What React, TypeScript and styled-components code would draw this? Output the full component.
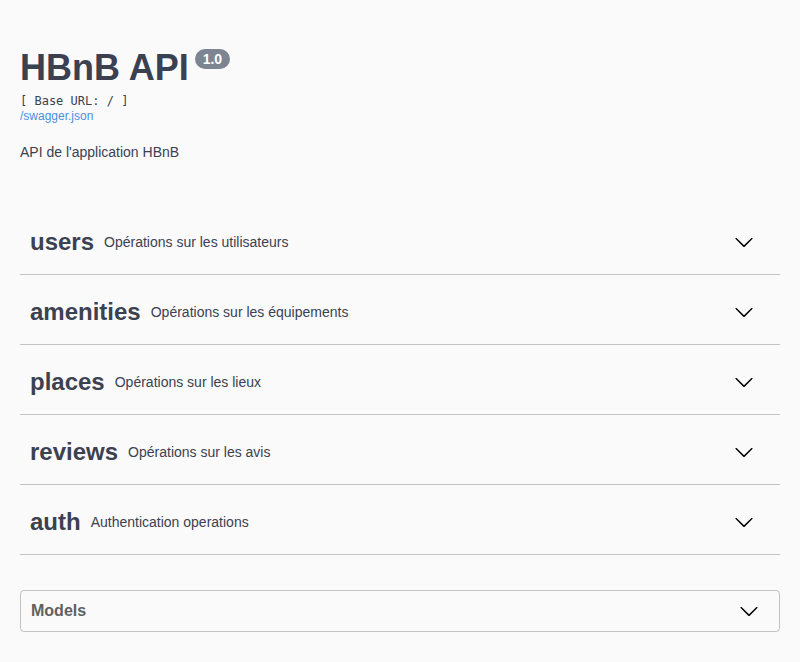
import React from "react";
import styled, { createGlobalStyle } from "styled-components";

const Global = createGlobalStyle`
  html, body { margin: 0; padding: 0; background: #fafafa; }
  body { font-family: "Liberation Sans", Arial, sans-serif; color: #3b4151; }
`;

const Page = styled.div`
  padding: 0 20px 30px;
  background: #fafafa;
`;

const Info = styled.div`
  padding-top: 47px;
  margin-bottom: 50px;
`;

const Title = styled.h2`
  margin: 0;
  font-size: 36px;
  line-height: 41px;
  font-weight: 700;
  color: #3b4151;
  display: flex;
  align-items: flex-start;
`;

const Version = styled.span`
  display: inline-block;
  margin: 2px 0 0 6px;
  padding: 2px 8px;
  border-radius: 57px;
  background: #7d8492;
  color: #fff;
  font-size: 14px;
  line-height: 16px;
  font-weight: 700;
`;

const BaseUrl = styled.pre`
  margin: 6px 0 0;
  font-family: "DejaVu Sans Mono", "Liberation Mono", monospace;
  font-size: 12px;
  line-height: 15px;
  color: #3b4151;
`;

const Link = styled.a`
  display: block;
  font-size: 12px;
  line-height: 14px;
  color: #4990e2;
  text-decoration: none;
`;

const Description = styled.p`
  margin: 21px 0 0;
  font-size: 14px;
  line-height: 16px;
  color: #3b4151;
`;

const TagRow = styled.div`
  display: flex;
  align-items: center;
  height: 44px;
  padding: 10px 26px 10px 10px;
  border-bottom: 1px solid rgba(59, 65, 81, 0.3);
  margin-bottom: 5px;
  cursor: pointer;
`;

const TagName = styled.span`
  font-size: 24px;
  font-weight: 700;
  color: #3b4151;
`;

const TagDesc = styled.small`
  flex: 1;
  padding: 0 10px;
  font-size: 14px;
  color: #3b4151;
`;

const Models = styled.section`
  margin-top: 35px;
  border: 1px solid rgba(59, 65, 81, 0.3);
  border-radius: 4px;
`;

const ModelsHead = styled.div`
  display: flex;
  align-items: center;
  height: 20px;
  padding: 10px 20px 10px 10px;
`;

const ModelsTitle = styled.h4`
  flex: 1;
  margin: 0;
  font-size: 16px;
  font-weight: 700;
  color: #606060;
`;

const Arrow = ({ color = "#000" }: { color?: string }) => (
  <svg width="20" height="20" viewBox="0 0 20 20" style={{ display: "block" }}>
    <path
      fill={color}
      d="M17.418 6.109c.272-.268.709-.268.979 0s.271.701 0 .969l-7.908 7.83c-.27.268-.707.268-.979 0l-7.908-7.83c-.27-.268-.27-.701 0-.969.271-.268.709-.268.979 0L10 13.25l7.418-7.141z"
    />
  </svg>
);

const tags = [
  ["users", "Opérations sur les utilisateurs"],
  ["amenities", "Opérations sur les équipements"],
  ["places", "Opérations sur les lieux"],
  ["reviews", "Opérations sur les avis"],
  ["auth", "Authentication operations"],
];

export default function App() {
  return (
    <Page>
      <Global />
      <Info>
        <Title>
          HBnB API<Version>1.0</Version>
        </Title>
        <BaseUrl>[ Base URL: / ]</BaseUrl>
        <Link href="#">/swagger.json</Link>
        <Description>API de l'application HBnB</Description>
      </Info>
      {tags.map(([name, desc]) => (
        <TagRow key={name}>
          <TagName>{name}</TagName>
          <TagDesc>{desc}</TagDesc>
          <Arrow />
        </TagRow>
      ))}
      <Models>
        <ModelsHead>
          <ModelsTitle>Models</ModelsTitle>
          <Arrow />
        </ModelsHead>
      </Models>
    </Page>
  );
}
